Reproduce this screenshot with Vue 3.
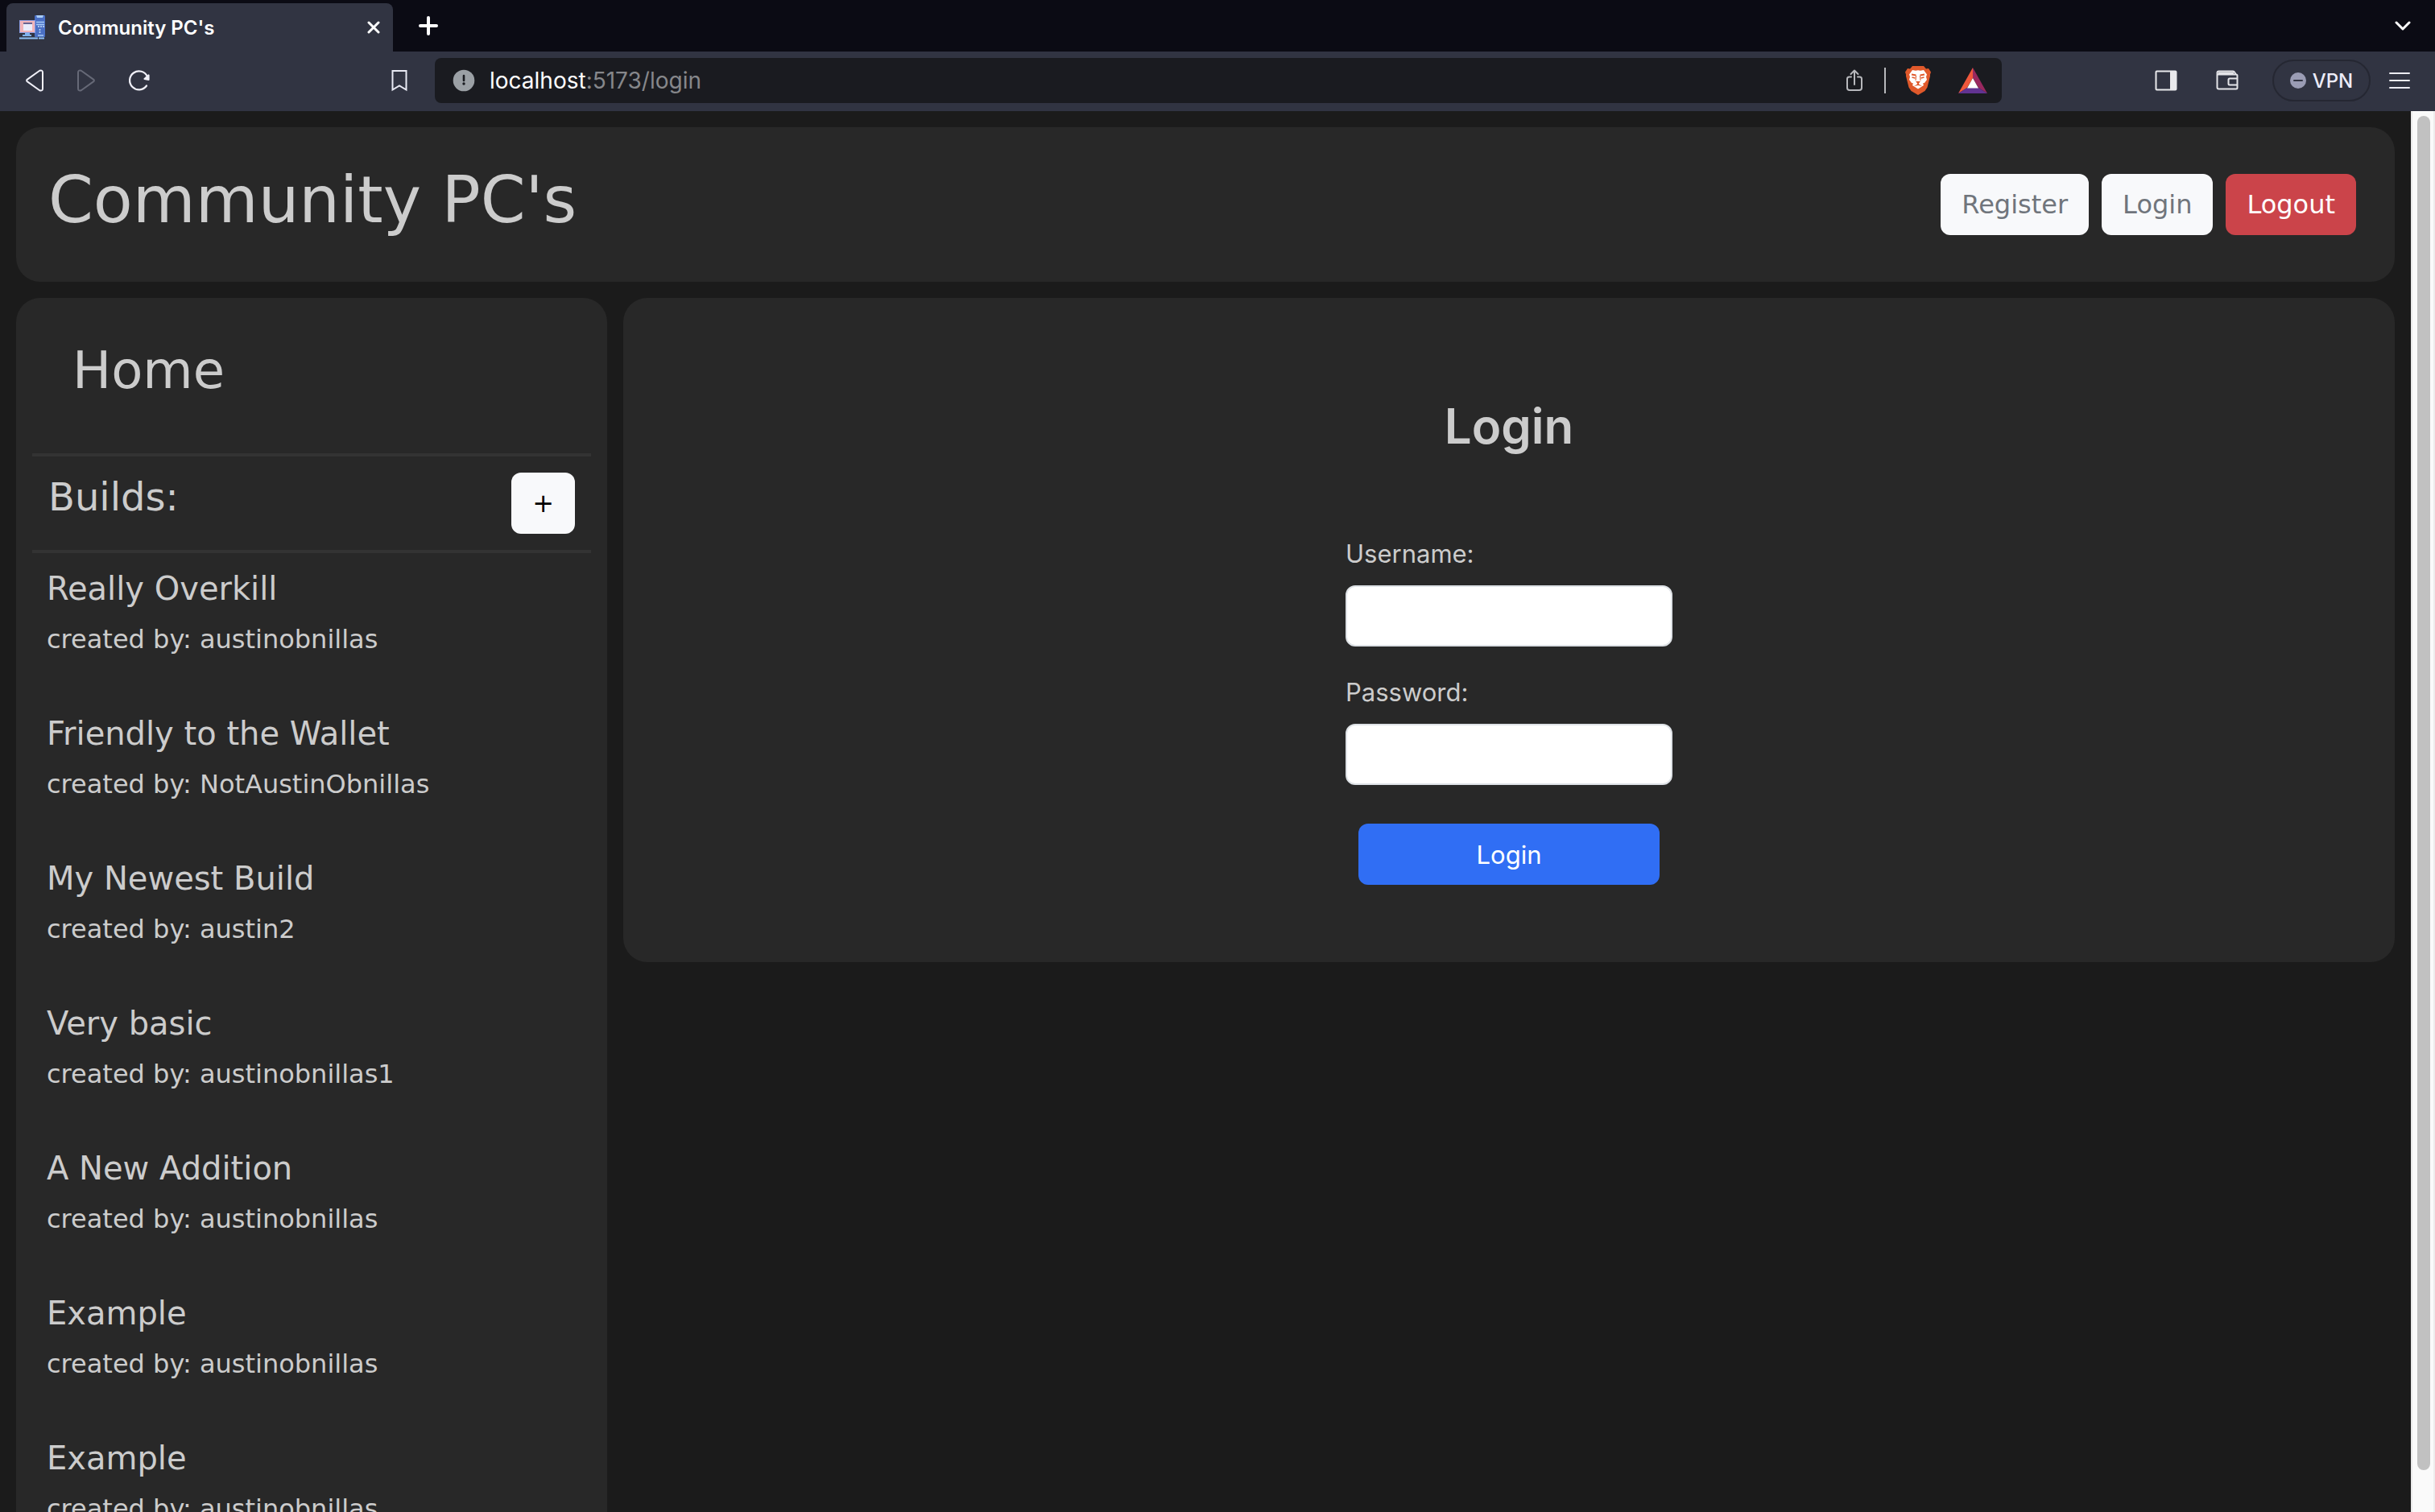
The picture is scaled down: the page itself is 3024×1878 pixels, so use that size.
<script setup>
import { ref } from 'vue'

const username = ref('')
const password = ref('')

const builds = [
  { name: 'Really Overkill', author: 'austinobnillas' },
  { name: 'Friendly to the Wallet', author: 'NotAustinObnillas' },
  { name: 'My Newest Build', author: 'austin2' },
  { name: 'Very basic', author: 'austinobnillas1' },
  { name: 'A New Addition', author: 'austinobnillas' },
  { name: 'Example', author: 'austinobnillas' },
  { name: 'Example', author: 'austinobnillas' },
]
</script>

<template>
  <div class="browser">
    <div class="tab-strip">
      <div class="tab">
        <svg class="favicon" viewBox="0 0 32 32" width="32" height="32" aria-hidden="true">
          <rect x="19" y="1" width="13" height="27" rx="1" fill="#4a6fc4" />
          <path d="M21 1h9l-1 3h-7z" fill="#a9cdf8" />
          <path d="M21 9.500h10M21 12.500h10M23 26h7" stroke="#a9cdf8" stroke-width="1.500" />
          <path d="M23 15h2M26 15h2M29 15h2" stroke="#c9def8" stroke-width="1.500" />
          <circle cx="25.500" cy="19" r="1" fill="#c9def8" />
          <circle cx="25.500" cy="22" r="1" fill="#c9def8" />
          <rect x="0" y="7" width="20" height="16" fill="#8b9be0" />
          <rect x="1" y="8" width="18" height="14" fill="#f0b4b9" />
          <rect x="5" y="12" width="11" height="8" fill="#e9ecfb" />
          <path d="M5 11h11" stroke="#3b4a86" stroke-width="1.500" />
          <path d="M7 23h6v2h2v2H4v-2h3z" fill="#7fb2ee" />
          <path d="M0 29.500h23M24 29.500h7" stroke="#8fc0f5" stroke-width="2" />
        </svg>
        <span class="tab-title">Community PC's</span>
        <button class="icon-button" aria-label="Close tab">
          <svg viewBox="0 0 16 16" width="16" height="16" fill="none" stroke="#fff" stroke-width="3" stroke-linecap="round">
            <path d="M2 2l12 12M14 2L2 14" />
          </svg>
        </button>
      </div>
      <button class="icon-button new-tab" aria-label="New tab">
        <svg viewBox="0 0 26 26" width="26" height="26" fill="none" stroke="#fff" stroke-width="4" stroke-linecap="round">
          <path d="M13 3v20M3 13h20" />
        </svg>
      </button>
      <button class="icon-button tab-search" aria-label="Search tabs">
        <svg viewBox="0 0 20 14" width="20" height="14" fill="none" stroke="#fff" stroke-width="3" stroke-linecap="round" stroke-linejoin="round">
          <path d="M2 3l8 8 8-8" />
        </svg>
      </button>
    </div>

    <div class="toolbar">
      <div class="nav-icons">
        <button class="icon-button" aria-label="Back">
          <svg viewBox="0 0 24 28" width="24" height="28" fill="none" stroke="#f0f0f8" stroke-width="2" stroke-linejoin="round">
            <path d="M3 12.600L18.200 1.800Q22 .6 22 4v20q0 3.400-3.800 2.200L3 15.400Q1.200 14 3 12.600z" />
          </svg>
        </button>
        <button class="icon-button" aria-label="Forward" disabled>
          <svg viewBox="0 0 24 28" width="24" height="28" fill="none" stroke="#666977" stroke-width="2" stroke-linejoin="round">
            <path d="M21 12.600L5.800 1.800Q2 .6 2 4v20q0 3.400 3.800 2.200L21 15.400Q22.800 14 21 12.600z" />
          </svg>
        </button>
        <button class="icon-button" aria-label="Reload">
          <svg viewBox="0 0 28 28" width="28" height="28" fill="none" stroke="#f0f0f8" stroke-width="2.200" stroke-linecap="round">
            <path d="M23 20.500A11.500 11.500 0 1 1 24 9" />
            <path d="M25.500 7.500v5.500l-5-1z" fill="#f0f0f8" stroke-linejoin="round" />
          </svg>
        </button>
      </div>
      <button class="icon-button bookmark" aria-label="Bookmark this page">
        <svg viewBox="0 0 20 28" width="20" height="28" fill="none" stroke="#e8e9f3" stroke-width="2">
          <path d="M1.500 2h17v23.500L10 20.500l-8.500 5z" />
        </svg>
      </button>
      <div class="address-bar">
        <svg viewBox="0 0 28 28" width="28" height="28" aria-hidden="true">
          <circle cx="14" cy="14" r="13.300" fill="#9ba0a5" />
          <path d="M14 8v6" stroke="#1a1b20" stroke-width="2.600" stroke-linecap="round" />
          <circle cx="14" cy="18" r="1.700" fill="#1a1b20" />
        </svg>
        <span class="url"><span class="host">localhost</span>:5173/login</span>
        <div class="address-actions">
          <button class="icon-button" aria-label="Share">
            <svg viewBox="0 0 22 28" width="22" height="28" fill="none" stroke="#b7b8bc" stroke-width="2" stroke-linecap="round" stroke-linejoin="round">
              <path d="M7 9.500H4.500Q2 9.500 2 12v11q0 3 3 3h12q3 0 3-3V12q0-2.500-2.500-2.500H15" />
              <path d="M11 19V1.500M6.500 6L11 1.500 15.500 6" />
            </svg>
          </button>
          <span class="divider"></span>
          <button class="icon-button" aria-label="Brave Shields">
            <svg viewBox="0 0 32 36" width="32" height="36">
              <path d="M9 0h14l3 3.500 3-.5 3 4.500-1 3v2l-3.500 14-3 4.500L16 36l-8.500-5-3-4.500L1 12.500v-2l-1-3L3 3l3 .5z" fill="#e0592b" />
              <path d="M9 5l4 .8 3-.5 3 .5 4-.8 4 5.500-1 3 1 3.500-3 4-2 .5 1 2.500-7 4.500-7-4.500 1-2.500-2-.5-3-4 1-3.500-1-3z" fill="#fff" />
              <path d="M8 10.500l5.500 1M24 10.500l-5.500 1M8.500 14l4 1M23.500 14l-4 1" fill="none" stroke="#e0592b" stroke-width="1.800" />
              <path d="M13.500 12l-.5 6M18.500 12l.5 6" fill="none" stroke="#e0592b" stroke-width="1" />
              <path d="M13 19h6l-2 2.500v1l4 2.500-5-1-5 1 4-2.500v-1z" fill="#e0592b" />
            </svg>
          </button>
          <button class="icon-button" aria-label="Brave Rewards">
            <svg viewBox="0 0 36 32" width="36" height="32">
              <path d="M18 0L0 32l11-7 7-12z" fill="#f0583c" />
              <path d="M18 0l18 32-11-7-7-12z" fill="#99285f" />
              <path d="M0 32h36l-11-7H11z" fill="#623392" />
              <path d="M18 13l7 12.500H11z" fill="#fff" />
            </svg>
          </button>
        </div>
      </div>
      <div class="browser-actions">
        <button class="icon-button" aria-label="Side panel">
          <svg viewBox="0 0 28 26" width="28" height="26">
            <rect x="1.500" y="1.500" width="25" height="23" rx="1" fill="none" stroke="#e9e9ec" stroke-width="2" />
            <path d="M19 1h8v24h-8z" fill="#e9e9ec" />
          </svg>
        </button>
        <button class="icon-button" aria-label="Wallet">
          <svg viewBox="0 0 28 26" width="28" height="26" fill="none" stroke="#e4e4e8" stroke-width="2" stroke-linejoin="round">
            <path d="M1.500 4.500v17q0 2 2 2H25q1.500 0 1.500-1.500V7q0-1.500-1.500-1.500L22.500 2Q22 1.500 21 1.500H3.500q-2 0-2 2t2 2H25M3 3.700h19" />
            <path d="M26.500 10.500H17q-1.500 0-1.500 1.500v5q0 1.500 1.500 1.500h9.500" />
          </svg>
        </button>
        <button class="vpn">
          <svg viewBox="0 0 20 20" width="20" height="20" aria-hidden="true">
            <circle cx="10" cy="10" r="10" fill="#9a9cb4" />
            <path d="M5 10h10" stroke="#313442" stroke-width="2" stroke-linecap="round" />
          </svg>
          VPN
        </button>
        <button class="icon-button" aria-label="Menu">
          <svg viewBox="0 0 28 22" width="28" height="22" stroke="#ececf2" stroke-width="2" stroke-linecap="round">
            <path d="M2 2h24M2 11h24M2 20h24" />
          </svg>
        </button>
      </div>
    </div>

    <div class="viewport">
      <div class="page">
        <header class="card site-header">
          <h1>Community PC's</h1>
          <nav class="account">
            <button class="btn btn-light">Register</button>
            <button class="btn btn-light">Login</button>
            <button class="btn btn-danger">Logout</button>
          </nav>
        </header>
        <div class="columns">
          <aside class="card sidebar">
            <a class="home" href="#">Home</a>
            <div class="builds-bar">
              <h2>Builds:</h2>
              <button class="btn add" aria-label="Add a build">+</button>
            </div>
            <ul class="builds">
              <li v-for="(build, i) in builds" :key="i">
                <h3>{{ build.name }}</h3>
                <p>created by: {{ build.author }}</p>
              </li>
            </ul>
          </aside>
          <main class="card login-panel">
            <h2>Login</h2>
            <form class="login-form" @submit.prevent>
              <label for="username">Username:</label>
              <input id="username" v-model="username" type="text" />
              <label for="password">Password:</label>
              <input id="password" v-model="password" type="password" />
              <button class="btn btn-primary" type="submit">Login</button>
            </form>
          </main>
        </div>
      </div>
      <div class="scrollbar"><div class="thumb"></div></div>
    </div>
  </div>
</template>

<style>
body {
  margin: 0;
  background: #1b1b1b;
}
</style>

<style scoped>
* {
  box-sizing: border-box;
}
h1,
h2,
h3,
p,
ul {
  margin: 0;
  padding: 0;
  font-weight: 400;
}
button {
  font: inherit;
  cursor: pointer;
}
svg {
  display: block;
  flex: none;
}
.browser {
  display: flex;
  flex-direction: column;
  height: 100vh;
  overflow: hidden;
  font-family: Inter, "Liberation Sans", sans-serif;
}
.icon-button {
  display: flex;
  padding: 0;
  border: 0;
  background: none;
}
.tab-strip {
  display: flex;
  align-items: center;
  flex: none;
  height: 64px;
  padding: 0 30px 0 8px;
  background: #0b0b14;
}
.tab {
  display: flex;
  align-items: center;
  align-self: flex-end;
  width: 480px;
  height: 60px;
  padding: 0 16px;
  border-radius: 8px 8px 0 0;
  background: #313442;
}
.tab-title {
  flex: 1;
  margin-left: 16px;
  color: #fff;
  font-size: 24px;
  font-weight: 600;
}
.new-tab {
  margin-left: 31px;
}
.tab-search {
  margin-left: auto;
}
.toolbar {
  display: flex;
  align-items: center;
  flex: none;
  height: 74px;
  padding: 0 30px 2px 31px;
  background: #313442;
}
.nav-icons {
  display: flex;
  gap: 40px;
}
.bookmark {
  margin-left: 299px;
}
.address-bar {
  display: flex;
  align-items: center;
  flex: 1;
  height: 56px;
  margin-left: 34px;
  padding: 0 18px 0 22px;
  border-radius: 8px;
  background: #1a1b20;
}
.url {
  margin-left: 18px;
  color: #86878b;
  font-size: 28px;
}
.host {
  color: #fff;
}
.address-actions {
  display: flex;
  align-items: center;
  gap: 24px;
  margin-left: auto;
}
.address-actions .icon-button:last-child {
  margin-left: 10px;
}
.divider {
  width: 2px;
  height: 32px;
  margin-left: 2px;
  background: #b7b8bc;
}
.browser-actions {
  display: flex;
  align-items: center;
  gap: 22px;
  margin-left: 190px;
}
.browser-actions .icon-button + .icon-button {
  margin: 0 20px 0 26px;
}
.vpn {
  display: flex;
  align-items: center;
  justify-content: center;
  gap: 8px;
  width: 122px;
  height: 52px;
  border: 2px solid #252732;
  border-radius: 26px;
  background: none;
  color: #ececf8;
  font-size: 24px;
  font-weight: 500;
}
.viewport {
  display: flex;
  flex: 1;
  min-height: 0;
}
.page {
  flex: 1;
  min-width: 0;
  padding: 20px;
  overflow: hidden;
  background: #1b1b1b;
  color: #cccccc;
}
.card {
  border-radius: 30px;
  background: #282828;
}
.site-header {
  display: flex;
  align-items: flex-start;
  justify-content: space-between;
  height: 192px;
  padding: 43px 48px 0 40px;
  font-family: "DejaVu Sans", sans-serif;
}
.site-header h1 {
  font-size: 80px;
  line-height: 96px;
}
.account {
  display: flex;
  gap: 16px;
  padding-top: 15px;
}
.btn {
  height: 76px;
  padding: 0 26px;
  border: 0;
  border-radius: 12px;
  font-size: 32px;
}
.btn-light {
  background: #f8f9fb;
  color: #70757c;
}
.btn-danger {
  background: #cb444a;
  color: #fff;
}
.columns {
  display: flex;
  align-items: flex-start;
  gap: 20px;
  margin-top: 20px;
}
.sidebar {
  flex: none;
  width: 25%;
  max-width: 734px;
  padding: 52px 20px 20px;
  font-family: "DejaVu Sans", sans-serif;
}
.home {
  display: block;
  margin: 0 0 65px 50px;
  color: inherit;
  font-size: 64px;
  line-height: 76px;
  text-decoration: none;
}
.builds-bar {
  display: flex;
  align-items: flex-start;
  justify-content: space-between;
  padding: 20px;
  border-top: 4px solid #333333;
  border-bottom: 4px solid #333333;
}
.builds-bar h2 {
  font-size: 48px;
  line-height: 60px;
}
.add {
  background: #f8f9fb;
  color: #000;
}
.builds {
  padding: 20px 18px 0;
  list-style: none;
}
.builds li {
  height: 180px;
}
.builds h3 {
  font-size: 40px;
  line-height: 48px;
}
.builds p {
  margin-top: 16px;
  font-size: 32px;
  line-height: 46px;
}
.login-panel {
  flex: 1;
  padding: 121px 20px 96px;
}
.login-panel h2 {
  font-size: 60px;
  font-weight: 600;
  line-height: 76px;
  text-align: center;
}
.login-form {
  display: flex;
  flex-direction: column;
  width: 406px;
  margin: 97px auto 0;
}
.login-form label {
  margin-bottom: 15px;
  font-size: 31px;
  line-height: 48px;
}
.login-form input {
  height: 76px;
  margin: 0 0 33px;
  padding: 12px 24px;
  border: 2px solid #dee2e6;
  border-radius: 12px;
  background: #fff;
  font-family: inherit;
  font-size: 31px;
}
.btn-primary {
  margin: 15px 16px 0;
  background: #306ef4;
  color: #fff;
  font-size: 31px;
}
.scrollbar {
  flex: none;
  width: 30px;
  padding: 6px 4px 52px 6px;
  border-left: 2px solid #e8e8e8;
  border-right: 2px solid #ededed;
  background: #fafafa;
}
.thumb {
  width: 16px;
  height: 100%;
  border-radius: 8px;
  background: #c1c1c1;
}
</style>
